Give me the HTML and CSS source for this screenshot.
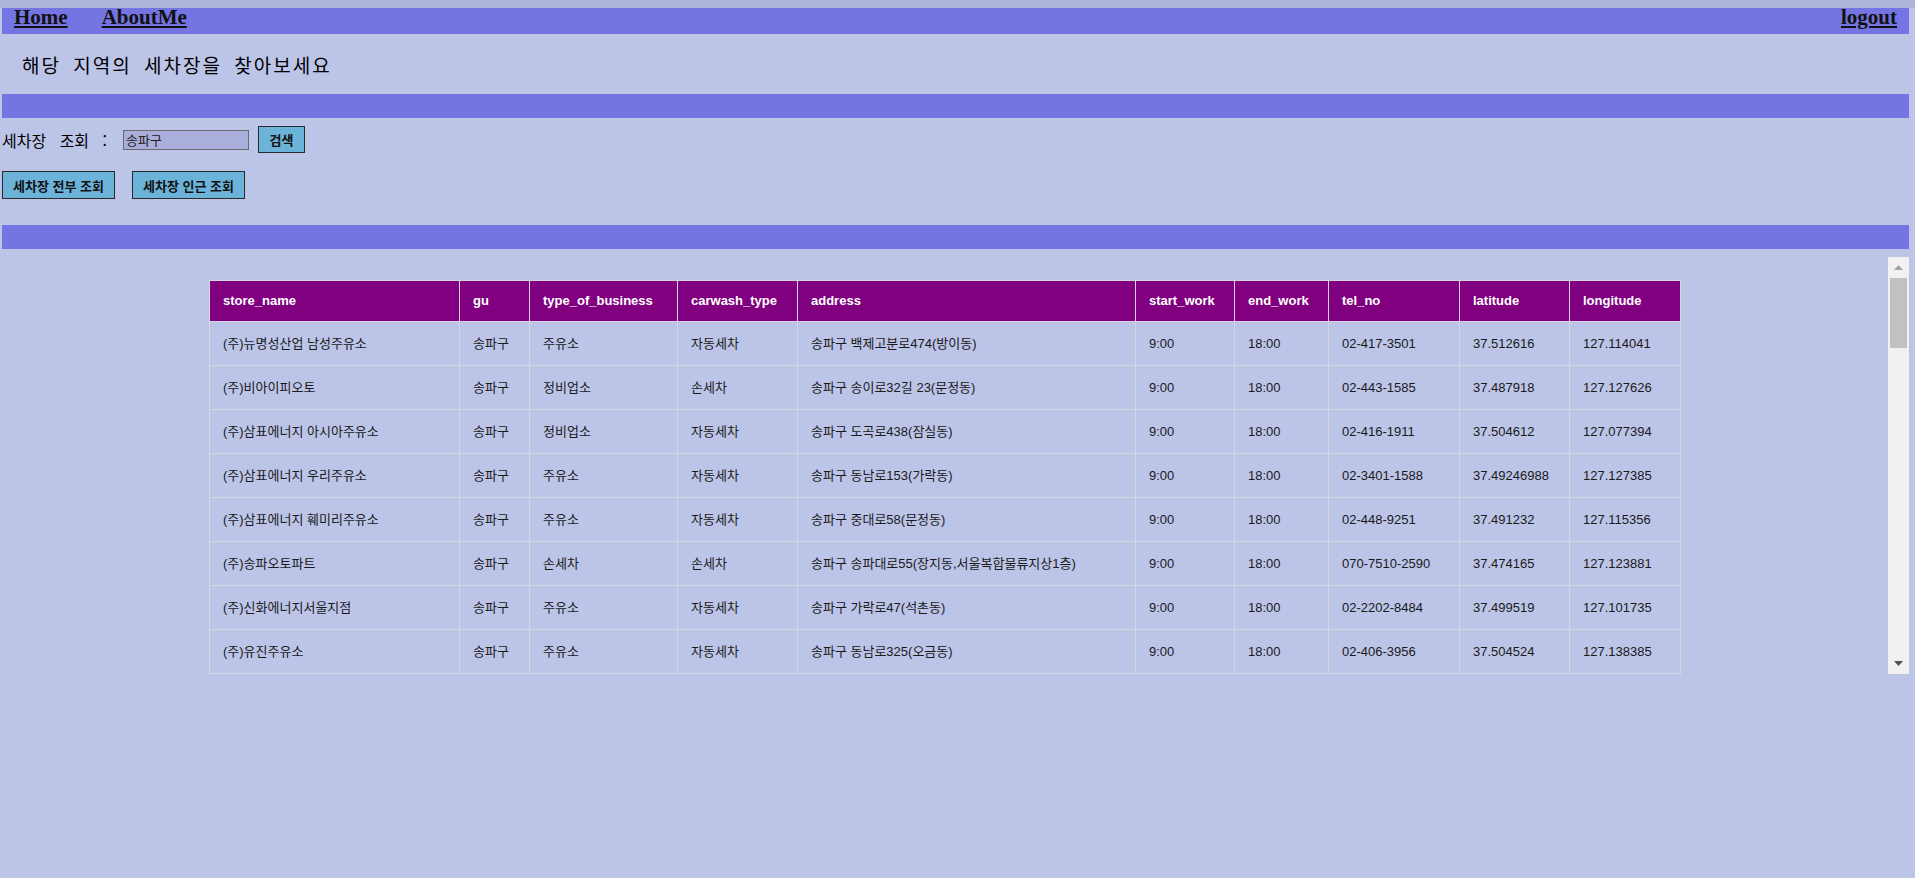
FILE: index.html
```html
<!DOCTYPE html>
<html lang="ko">
<head>
<meta charset="utf-8">
<title>세차장 조회</title>
<link rel="stylesheet" href="styles.css">
</head>
<body>
<div class="page">
  <nav class="topnav">
    <div class="nav-left">
      <a href="#" class="nav-link">Home</a>
      <a href="#" class="nav-link">AboutMe</a>
    </div>
    <a href="#" class="nav-link">logout</a>
  </nav>

  <div class="intro">해당 지역의 세차장을 찾아보세요</div>

  <div class="band"></div>

  <form class="search-row" onsubmit="return false">
    <label class="search-label" for="gu">세차장 조회 :</label>
    <input id="gu" class="search-input" type="text" value="송파구">
    <button type="submit" class="btn btn-search">검색</button>
  </form>

  <div class="action-row">
    <button class="btn btn-action">세차장 전부 조회</button>
    <button class="btn btn-action">세차장 인근 조회</button>
  </div>

  <div class="band band-second"></div>

  <div class="result-frame">
    <div class="result-scroll">
      <table class="result-table">
        <colgroup>
          <col class="c-name"><col class="c-gu"><col class="c-biz"><col class="c-wash"><col class="c-addr">
          <col class="c-start"><col class="c-end"><col class="c-tel"><col class="c-lat"><col class="c-lng">
        </colgroup>
        <thead>
          <tr>
            <th>store_name</th><th>gu</th><th>type_of_business</th><th>carwash_type</th><th>address</th>
            <th>start_work</th><th>end_work</th><th>tel_no</th><th>latitude</th><th>longitude</th>
          </tr>
        </thead>
        <tbody>
          <tr><td>(주)뉴명성산업 남성주유소</td><td>송파구</td><td>주유소</td><td>자동세차</td><td>송파구 백제고분로474(방이동)</td><td>9:00</td><td>18:00</td><td>02-417-3501</td><td>37.512616</td><td>127.114041</td></tr>
          <tr><td>(주)비아이피오토</td><td>송파구</td><td>정비업소</td><td>손세차</td><td>송파구 송이로32길 23(문정동)</td><td>9:00</td><td>18:00</td><td>02-443-1585</td><td>37.487918</td><td>127.127626</td></tr>
          <tr><td>(주)삼표에너지 아시아주유소</td><td>송파구</td><td>정비업소</td><td>자동세차</td><td>송파구 도곡로438(잠실동)</td><td>9:00</td><td>18:00</td><td>02-416-1911</td><td>37.504612</td><td>127.077394</td></tr>
          <tr><td>(주)삼표에너지 우리주유소</td><td>송파구</td><td>주유소</td><td>자동세차</td><td>송파구 동남로153(가락동)</td><td>9:00</td><td>18:00</td><td>02-3401-1588</td><td>37.49246988</td><td>127.127385</td></tr>
          <tr><td>(주)삼표에너지 훼미리주유소</td><td>송파구</td><td>주유소</td><td>자동세차</td><td>송파구 중대로58(문정동)</td><td>9:00</td><td>18:00</td><td>02-448-9251</td><td>37.491232</td><td>127.115356</td></tr>
          <tr><td>(주)송파오토파트</td><td>송파구</td><td>손세차</td><td>손세차</td><td>송파구 송파대로55(장지동,서울복합물류지상1층)</td><td>9:00</td><td>18:00</td><td>070-7510-2590</td><td>37.474165</td><td>127.123881</td></tr>
          <tr><td>(주)신화에너지서울지점</td><td>송파구</td><td>주유소</td><td>자동세차</td><td>송파구 가락로47(석촌동)</td><td>9:00</td><td>18:00</td><td>02-2202-8484</td><td>37.499519</td><td>127.101735</td></tr>
          <tr><td>(주)유진주유소</td><td>송파구</td><td>주유소</td><td>자동세차</td><td>송파구 동남로325(오금동)</td><td>9:00</td><td>18:00</td><td>02-406-3956</td><td>37.504524</td><td>127.138385</td></tr>
        </tbody>
      </table>
    </div>
    <div class="scrollbar" aria-hidden="true">
      <div class="sb-btn">
        <svg width="9" height="5" viewBox="0 0 9 5"><path d="M0 5 L4.5 0 L9 5 Z" fill="#a3a3a3"/></svg>
      </div>
      <div class="sb-track">
        <div class="sb-thumb"></div>
      </div>
      <div class="sb-btn">
        <svg width="9" height="5" viewBox="0 0 9 5"><path d="M0 0 L9 0 L4.5 5 Z" fill="#505050"/></svg>
      </div>
    </div>
  </div>
</div>
</body>
</html>
```

FILE: styles.css
```css
html, body {
  margin: 0;
  padding: 0;
  background: #bcc4e8;
}

body {
  border-top: 8px solid #adb5da;
  font-family: "Liberation Sans", "Noto Sans CJK KR", sans-serif;
  color: #111;
}

.page {
  padding: 0 6px 0 2px;
}

/* top navigation */
.topnav {
  display: flex;
  justify-content: space-between;
  align-items: flex-start;
  height: 26px;
  padding: 0 12px;
  background: #7474e2;
}

.nav-left {
  display: flex;
  gap: 34px;
}

.nav-link {
  font-family: "Liberation Serif", serif;
  font-weight: bold;
  font-size: 21px;
  line-height: 19px;
  color: #111;
  text-decoration: underline;
}

/* intro text */
.intro {
  height: 60px;
  display: flex;
  align-items: center;
  padding-left: 20px;
  font-family: "Noto Sans CJK KR", sans-serif;
  font-size: 19px;
  letter-spacing: 2px;
  word-spacing: 5px;
  color: #000;
}

.band {
  height: 24px;
  background: #7474e2;
}

.band-second {
  margin-top: 26px;
}

/* search row */
.search-row {
  display: flex;
  align-items: center;
  height: 27px;
  margin: 8px 0 0 0;
}

.search-label {
  font-family: "Noto Sans CJK KR", sans-serif;
  font-size: 16px;
  line-height: 20px;
  word-spacing: 9px;
  color: #000;
  margin-right: 16px;
}

.search-input {
  box-sizing: border-box;
  width: 126px;
  height: 20px;
  margin: 0 9px 0 0;
  padding: 0 2px;
  border: 1px solid #6b6b6b;
  background: #aaaedb;
  font-family: "Noto Sans CJK KR", sans-serif;
  font-size: 13px;
  color: #222;
  outline: none;
}

.btn {
  box-sizing: border-box;
  margin: 0;
  padding: 0;
  background: #6cb3d9;
  border: 1px solid #2a2a2a;
  font-family: "Noto Sans CJK KR", sans-serif;
  font-weight: bold;
  font-size: 13px;
  color: #111;
  cursor: pointer;
}

.btn-search {
  width: 47px;
  height: 27px;
}

.action-row {
  display: flex;
  gap: 17px;
  margin-top: 18px;
}

.btn-action {
  width: 113px;
  height: 28px;
}

/* result area */
.result-frame {
  display: flex;
  margin-top: 8px;
  height: 417px;
}

.result-scroll {
  flex: 1;
  min-width: 0;
  overflow: hidden;
}

.scrollbar {
  width: 21px;
  flex: none;
  display: flex;
  flex-direction: column;
  background: #f1f1f1;
}

.sb-btn {
  height: 21px;
  flex: none;
  display: flex;
  align-items: center;
  justify-content: center;
}

.sb-track {
  flex: 1;
  padding: 0 2px;
}

.sb-thumb {
  height: 70px;
  background: #c1c1c1;
}

.result-table {
  table-layout: fixed;
  width: 1472px;
  margin: 23px auto 0;
  border-collapse: collapse;
  font-family: "Liberation Sans", "Noto Sans CJK KR", sans-serif;
  font-size: 13px;
}

.c-name { width: 250px; }
.c-gu { width: 70px; }
.c-biz { width: 148px; }
.c-wash { width: 120px; }
.c-addr { width: 338px; }
.c-start { width: 99px; }
.c-end { width: 94px; }
.c-tel { width: 131px; }
.c-lat { width: 110px; }
.c-lng { width: 111px; }

.result-table th,
.result-table td {
  border: 1px solid #d6d6e0;
  text-align: left;
  white-space: nowrap;
}

.result-table th {
  background: #800080;
  color: #fff;
  font-weight: bold;
  padding: 12px 13px;
  line-height: 16px;
}

.result-table td {
  color: #1a1a1a;
  padding: 14px 13px;
  line-height: 15px;
}
```
